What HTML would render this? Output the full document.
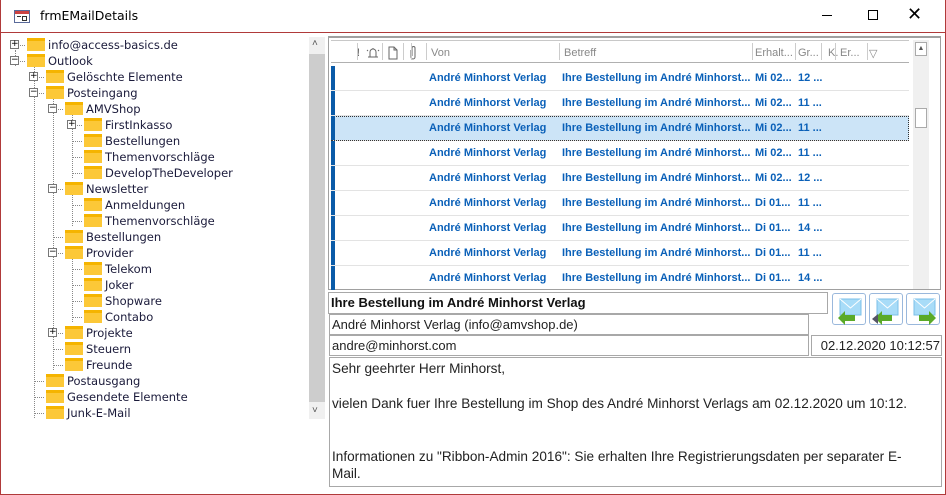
<!DOCTYPE html><html><head><meta charset="utf-8"><style>
*{margin:0;padding:0;box-sizing:border-box}
body{width:946px;height:495px;background:#fff;position:relative;overflow:hidden;font-family:"DejaVu Sans","Liberation Sans",sans-serif}
.win{position:absolute;left:0;top:0;width:946px;height:495px;border:1px solid #b03a3a;border-top:none}
.a{position:absolute}
.t{position:absolute;font-size:11.5px;color:#1a1a3a;white-space:nowrap;line-height:16px}
.f{position:absolute;width:18px;height:13px;background:#fcc838;border-top:3px solid #f5b400}
.b{position:absolute;width:9px;height:9px;border:1px solid #777;background:#fff;font-size:9px;line-height:7px;text-align:center;color:#000}
.vl{position:absolute;border-left:1px dotted #888;width:0}
.hl{position:absolute;border-top:1px dotted #888;height:0}
.row{position:absolute;left:331px;width:578px;height:25px;border-bottom:1px solid #e3e3e3}
.row::before{content:"";position:absolute;left:0;top:0;width:4px;height:24px;background:#0a5ba8}
.rt{position:absolute;top:5px;font:bold 11px "Liberation Sans",sans-serif;color:#0a60b8;white-space:nowrap}
.h{position:absolute;top:47px;font:11px "Liberation Sans",sans-serif;color:#888}
.fld{position:absolute;border:1px solid #a8a8a8;font:13px "Liberation Sans",sans-serif;color:#222;padding-left:2px;line-height:19px;white-space:nowrap}
.btn{position:absolute;top:293px;width:34px;height:32px;border:1px solid #9ab8dc;border-radius:3px;background:#fff}
</style></head><body>
<div class="win"></div>
<div class="a" style="left:14px;top:10px;width:16px;height:13px;border:1px solid #5a6a9a;background:#fff"><div class="a" style="left:0;top:0;width:14px;height:3px;background:#c44"></div><div class="a" style="left:2px;top:5px;width:4px;height:1px;background:#333"></div><div class="a" style="left:7px;top:5px;width:5px;height:5px;border:1px solid #333"></div></div>
<div class="a" style="left:40px;top:8px;font:12.5px 'DejaVu Sans',sans-serif;color:#000">frmEMailDetails</div>
<div class="a" style="left:822px;top:15px;width:10px;height:1px;background:#000"></div>
<div class="a" style="left:868px;top:10px;width:10px;height:10px;border:1px solid #000"></div>
<div class="a" style="left:907px;top:4px;font:18px 'DejaVu Sans',sans-serif;color:#000">✕</div>
<div class="a" style="left:1px;top:32px;width:944px;height:1px;background:#b03a3a"></div>

<div class="vl" style="left:15px;top:50px;height:16px"></div>
<div class="vl" style="left:34px;top:66px;height:352px"></div>
<div class="vl" style="left:53px;top:98px;height:272px"></div>
<div class="vl" style="left:72px;top:114px;height:64px"></div>
<div class="vl" style="left:72px;top:194px;height:32px"></div>
<div class="vl" style="left:72px;top:258px;height:64px"></div>
<div id="tree"></div>
<script>
var d=[[0,'+','info@access-basics.de'],[0,'-','Outlook'],[1,'+','Gelöschte Elemente'],[1,'-','Posteingang'],[2,'-','AMVShop'],[3,'+','FirstInkasso'],[3,'','Bestellungen'],[3,'','Themenvorschläge'],[3,'','DevelopTheDeveloper'],[2,'-','Newsletter'],[3,'','Anmeldungen'],[3,'','Themenvorschläge'],[2,'','Bestellungen'],[2,'-','Provider'],[3,'','Telekom'],[3,'','Joker'],[3,'','Shopware'],[3,'','Contabo'],[2,'+','Projekte'],[2,'','Steuern'],[2,'','Freunde'],[1,'','Postausgang'],[1,'','Gesendete Elemente'],[1,'','Junk-E-Mail']];
var h='';d.forEach(function(r,i){var y=45+i*16,x=48+r[0]*19;
h+='<div class="hl" style="left:'+(x-33)+'px;top:'+y+'px;width:10px"></div>';
if(r[1])h+='<div class="b" style="left:'+(x-38)+'px;top:'+(y-5)+'px">'+(r[1]=='+'?'+':'−')+'</div>';
h+='<div class="f" style="left:'+(x-21)+'px;top:'+(y-7)+'px"></div><div class="t" style="left:'+x+'px;top:'+(y-8)+'px">'+r[2]+'</div>';});
document.getElementById('tree').innerHTML=h;
</script>
<div class="a" style="left:309px;top:37px;width:16px;height:382px;background:#f0f0f0"></div>
<div class="a" style="left:309px;top:54px;width:16px;height:348px;background:#cdcdcd"></div>
<div class="a" style="left:312px;top:38px;font:10px sans-serif;color:#555">˄</div>
<div class="a" style="left:312px;top:405px;font:10px sans-serif;color:#555">˅</div>

<div class="a" style="left:328px;top:36px;width:613px;height:254px;border:1px solid #a0a0a0;border-top:2px solid #a0a0a0"></div>
<div class="a" style="left:331px;top:62px;width:578px;height:1px;background:#b0b0b0"></div>
<div class="a" style="left:331px;top:40px;width:578px;height:1px;background:#c8c8c8"></div>
<div class="h" style="left:356px;color:#000;font-weight:bold">!</div>
<svg class="a" style="left:360px;top:44px" width="60" height="16" fill="none" stroke="#666" stroke-width="1">
<path d="M8 13h10M10 13v-5a3 3 0 0 1 6 0v5M13 4v1M7 6l1 1M19 6l-1 1"/>
<path d="M29 3h5l3 3v9h-8z M34 3v3h3"/>
<path d="M51 6v7a2 2 0 0 0 4 0V4a1.5 1.5 0 0 0-3 0v8"/>
</svg>
<div class="h" style="left:431px">Von</div><div class="h" style="left:564px">Betreff</div><div class="h" style="left:755px">Erhalt...</div><div class="h" style="left:798px">Gr...</div><div class="h" style="left:828px">K.</div><div class="h" style="left:840px">Er...</div><div class="h" style="left:869px">▽</div>
<div class="a" style="left:357px;top:43px;width:1px;height:17px;background:#ccc"></div><div class="a" style="left:382px;top:43px;width:1px;height:17px;background:#ccc"></div><div class="a" style="left:403px;top:43px;width:1px;height:17px;background:#ccc"></div><div class="a" style="left:411px;top:43px;width:1px;height:17px;background:#ccc"></div><div class="a" style="left:426px;top:43px;width:1px;height:17px;background:#ccc"></div><div class="a" style="left:559px;top:43px;width:1px;height:17px;background:#ccc"></div><div class="a" style="left:752px;top:43px;width:1px;height:17px;background:#ccc"></div><div class="a" style="left:795px;top:43px;width:1px;height:17px;background:#ccc"></div><div class="a" style="left:821px;top:43px;width:1px;height:17px;background:#ccc"></div><div class="a" style="left:835px;top:43px;width:1px;height:17px;background:#ccc"></div><div class="a" style="left:867px;top:43px;width:1px;height:17px;background:#ccc"></div>
<div id="rows"></div>
<script>
var g=['Mi 02...|12 ...','Mi 02...|11 ...','Mi 02...|11 ...','Mi 02...|11 ...','Mi 02...|12 ...','Di 01...|11 ...','Di 01...|14 ...','Di 01...|11 ...','Di 01...|14 ...'];var s='';
g.forEach(function(v,i){var p=v.split('|');var sel=i==2?'background:#cce4f7;outline:1px dotted #333;outline-offset:-1px;':'';
s+='<div class="row" style="top:'+(66+i*25)+'px;'+sel+(i==8?'height:23px;border:none':'')+'"><span class="rt" style="left:98px;top:6px">André Minhorst Verlag</span><span class="rt" style="left:231px;top:6px">Ihre Bestellung im André Minhorst...</span><span class="rt" style="left:424px;top:6px">'+p[0]+'</span><span class="rt" style="left:467px;top:6px">'+p[1]+'</span></div>';});
document.getElementById('rows').innerHTML=s;
</script>
<div class="a" style="left:913px;top:40px;width:16px;height:249px;background:#f0f0f0"></div>
<div class="a" style="left:915px;top:42px;width:12px;height:14px;border:1px solid #aaa;background:#fff;font:7px sans-serif;text-align:center;line-height:12px;color:#555">▲</div>
<div class="a" style="left:915px;top:108px;width:12px;height:20px;border:1px solid #aaa;background:#fff"></div>
<div class="a" style="left:929px;top:40px;width:11px;height:249px;background:#fff"></div>

<div class="fld" style="left:328px;top:292px;width:500px;height:22px;font-weight:bold;color:#111">Ihre Bestellung im André Minhorst Verlag</div>
<div class="fld" style="left:329px;top:314px;width:480px;height:21px">André Minhorst Verlag (info@amvshop.de)</div>
<div class="fld" style="left:329px;top:335px;width:480px;height:21px">andre@minhorst.com</div>
<div class="fld" style="left:811px;top:335px;width:131px;height:21px;text-align:right;padding-right:1px">02.12.2020 10:12:57</div>
<div class="fld" style="left:329px;top:357px;width:613px;height:130px;line-height:17.5px;padding-top:2px;font-size:13.6px">Sehr geehrter Herr Minhorst,<br><br>vielen Dank fuer Ihre Bestellung im Shop des André Minhorst Verlags am 02.12.2020 um 10:12.<br><br><br>Informationen zu "Ribbon-Admin 2016": Sie erhalten Ihre Registrierungsdaten per separater E-<br>Mail.</div>
<div id="btns"></div>
<script>
var b='';[832,869,906].forEach(function(x,i){
var arr=i==2?'<polygon points="12,21 22,21 22,17 29,24 22,31 22,27 12,27" fill="#5aaa28"/>':'<polygon points="22,21 12,21 12,17 5,24 12,31 12,27 22,27" fill="#5aaa28"/>'+(i==1?'<polygon points="8,20 2,25 8,30" fill="#556"/>':'');
b+='<div class="btn" style="left:'+x+'px"><svg width="34" height="32"><rect x="7" y="5" width="21" height="16" fill="#a8dcf8" stroke="#7bbfe8"/><polyline points="7,5 17.5,14 28,5" fill="none" stroke="#fff"/>'+arr+'</svg></div>';});
document.getElementById('btns').innerHTML=b;
</script>
</body></html>
